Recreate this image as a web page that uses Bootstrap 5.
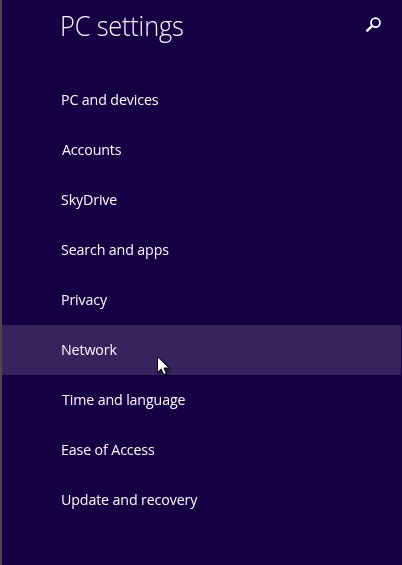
<!DOCTYPE html>
<html lang="en">
<head>
<meta charset="utf-8">
<meta name="viewport" content="width=device-width, initial-scale=1">
<title>PC settings</title>
<link href="https://cdn.jsdelivr.net/npm/bootstrap@5.3.0/dist/css/bootstrap.min.css" rel="stylesheet">
<style>
body { background: #160044; font-family: "Open Sans", "Noto Sans", sans-serif; }
.settings-pane { height: 565px; border-left: 2px solid #4b4b4b; padding-right: 1px; }
.pane-header { height: 75px; padding: 6px 19px 0 58px; }
.pane-title { font-size: 27px; font-weight: 300; line-height: 40px; letter-spacing: -.2px; color: #f8f5fd; transform: scaleX(.94); transform-origin: 0 0; }
.search-btn { margin-top: 10px; line-height: 0; }
.settings-nav .nav-link { height: 50px; padding: 0 0 0 59px; color: #fbf9ff; font-size: 15px; line-height: 48px; letter-spacing: -.15px; white-space: nowrap; }
.settings-nav .nav-link.nudged { padding-left: 60px; }
.settings-nav .nav-link.active { background: #37235e; }
.nav-text { display: inline-block; transform: scaleX(.95); transform-origin: 0 0; }
.pointer { left: 157px; top: 356px; filter: drop-shadow(2px 2px 1px rgba(0,0,0,.45)); }
</style>
</head>
<body class="overflow-hidden">
<main class="settings-pane">
  <header class="pane-header d-flex justify-content-between align-items-start">
    <h1 class="pane-title m-0">PC settings</h1>
    <button class="search-btn btn p-0 border-0" aria-label="Search">
      <svg width="17" height="17" viewBox="0 0 17 17" fill="none" stroke="#fff"><circle cx="10.5" cy="6.7" r="4.5" stroke-width="1.8"/><path d="M7.2 9.8 2.2 14.7" stroke-width="2.4" stroke-linecap="round"/></svg>
    </button>
  </header>
  <nav class="settings-nav nav flex-column">
    <a class="nav-link" href="#"><span class="nav-text">PC and devices</span></a>
    <a class="nav-link nudged" href="#"><span class="nav-text">Accounts</span></a>
    <a class="nav-link" href="#"><span class="nav-text">SkyDrive</span></a>
    <a class="nav-link" href="#"><span class="nav-text">Search and apps</span></a>
    <a class="nav-link" href="#"><span class="nav-text">Privacy</span></a>
    <a class="nav-link active" href="#"><span class="nav-text">Network</span></a>
    <a class="nav-link nudged" href="#"><span class="nav-text">Time and language</span></a>
    <a class="nav-link" href="#"><span class="nav-text">Ease of Access</span></a>
    <a class="nav-link" href="#"><span class="nav-text">Update and recovery</span></a>
  </nav>
</main>
<svg class="pointer position-absolute" width="13" height="20" viewBox="0 0 13 20"><path d="M.5.8V16.5L4.2 13l2.5 5.6 2.6-1.1L7 12h5Z" fill="#fff" stroke="#05020f"/></svg>
<script src="https://cdn.jsdelivr.net/npm/bootstrap@5.3.0/dist/js/bootstrap.bundle.min.js"></script>
</body>
</html>
